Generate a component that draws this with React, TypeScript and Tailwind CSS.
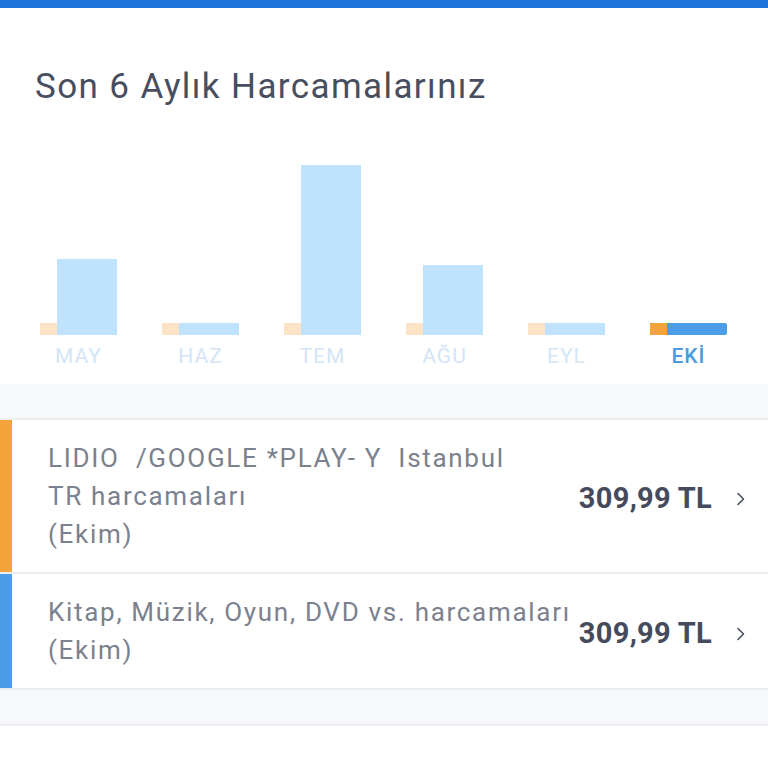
const months = [
  { label: 'MAY', blue: 76, active: false },
  { label: 'HAZ', blue: 12, active: false },
  { label: 'TEM', blue: 170, active: false },
  { label: 'AĞU', blue: 70, active: false },
  { label: 'EYL', blue: 12, active: false },
  { label: 'EKİ', blue: 12, active: true },
]

const rows = [
  {
    stripe: 'bg-[#f3a43c]',
    lines: ['LIDIO  /GOOGLE *PLAY- Y  Istanbul', 'TR harcamaları', '(Ekim)'],
    amount: '309,99 TL',
  },
  {
    stripe: 'bg-[#4a9de6]',
    lines: ['Kitap, Müzik, Oyun, DVD vs. harcamaları', '(Ekim)'],
    amount: '309,99 TL',
  },
]

function Chevron() {
  return (
    <svg width="10" height="16" viewBox="0 0 10 16" fill="none" className="shrink-0">
      <path d="M2 2.5 L7.5 8 L2 13.5" stroke="#4a4f60" strokeWidth="1.6" strokeLinecap="round" strokeLinejoin="round" />
    </svg>
  )
}

export default function App() {
  return (
    <div className="min-h-[768px] w-[768px] overflow-hidden bg-white font-['Roboto',sans-serif]">
      <div className="h-[8px] bg-[#1f74d9]" />

      <section className="bg-white pb-[16px]">
        <h1 className="mt-[58px] pl-[35px] text-[35px] leading-[42px] tracking-[1.4px] text-[#474e5f]">
          Son 6 Aylık Harcamalarınız
        </h1>

        <div className="flex gap-[45px] px-[40px]">
          {months.map((m) => (
            <div key={m.label} className="flex w-[77px] flex-col items-center">
              <div className="flex h-[227px] w-full items-end">
                <div className={`h-[12px] w-[17px] ${m.active ? 'bg-[#f4a23c]' : 'bg-[#fde3c6]'}`} />
                {m.active ? (
                  <div className="w-[60px] rounded-r-[2px] bg-[#4a9de6]" style={{ height: m.blue }} />
                ) : (
                  <div className="w-[60px] bg-[#bfe2fd]" style={{ height: m.blue }} />
                )}
              </div>
              <span
                className={`mt-[9px] text-[21px] leading-[24px] tracking-[1px] ${
                  m.active ? 'font-medium text-[#4a9be0]' : 'text-[#d3e5f7]'
                }`}
              >
                {m.label}
              </span>
            </div>
          ))}
        </div>
      </section>

      <div className="h-[36px] border-b-2 border-[#eceef1] bg-[#f7f8fa]" />

      <div>
        {rows.map((row, i) => (
          <div key={i} className="flex border-b-2 border-[#eceef1] bg-white">
            <div className={`w-[12px] shrink-0 ${row.stripe}`} />
            <div className="flex flex-1 items-center py-[19px] pl-[36px] pr-[22px]">
              <div className="flex-1 whitespace-pre text-[26px] leading-[38px] tracking-[1.7px] text-[#7b818e]">
                {row.lines.map((l) => (
                  <div key={l}>{l}</div>
                ))}
              </div>
              <span className="ml-[8px] shrink-0 pt-[6px] text-[29px] font-bold tracking-[0.3px] text-[#454a5c]">
                {row.amount}
              </span>
              <span className="ml-[24px] pt-[6px]">
                <Chevron />
              </span>
            </div>
          </div>
        ))}
      </div>

      <div className="h-[36px] border-b-2 border-[#eceef1] bg-[#f7f8fa]" />
      <div className="h-[60px] bg-white" />
    </div>
  )
}
